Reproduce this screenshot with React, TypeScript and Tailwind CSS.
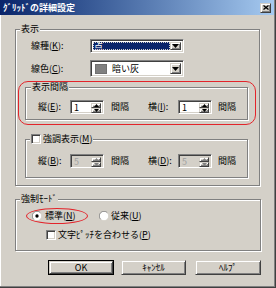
import type { ReactNode } from 'react'

const font = "font-['MS_UI_Gothic','Noto_Sans_CJK_JP',sans-serif]"
const etched = 'border border-[#808080] shadow-[inset_1px_1px_0_#fff,1px_1px_0_#fff]'
const sunken =
  'border border-t-[#808080] border-l-[#808080] border-r-white border-b-white shadow-[inset_1px_1px_0_#404040,inset_-1px_-1px_0_#d4d0c8]'
const raised =
  'bg-[#d4d0c8] border border-t-[#d4d0c8] border-l-[#d4d0c8] border-r-[#404040] border-b-[#404040] shadow-[inset_1px_1px_0_#fff,inset_-1px_-1px_0_#808080]'

function Key({ label, k }: { label: string; k: string }) {
  return (
    <span>
      {label}(<span className="underline underline-offset-1">{k}</span>)
    </span>
  )
}

function Group({ label, className, labelClass, children }: {
  label: ReactNode; className: string; labelClass?: string; children: ReactNode
}) {
  return (
    <div className={`relative ${etched} ${className}`}>
      <div className={`absolute -top-[6px] bg-[#d4d0c8] px-[1px] leading-[10px] flex items-center ${labelClass ?? 'left-[4px]'}`}>
        {label}
      </div>
      {children}
    </div>
  )
}

function DownArrow() {
  return (
    <svg width="7" height="4" viewBox="0 0 7 4"><polygon points="0,0 7,0 3.5,4" fill="#000" /></svg>
  )
}

function Combo({ h, children }: { h: string; children: ReactNode }) {
  return (
    <div className={`w-[94px] ${h} bg-white ${sunken} flex p-[2px] pr-[2px]`}>
      <div className="flex-1 flex items-center min-w-0">{children}</div>
      <div className={`w-[11px] ${raised} flex items-center justify-center`}>
        <DownArrow />
      </div>
    </div>
  )
}

function Spin({ value, disabled }: { value: string; disabled?: boolean }) {
  return (
    <div className={`w-[34px] h-[14px] ${disabled ? 'bg-[#d4d0c8]' : 'bg-white'} ${sunken} flex p-[2px]`}>
      <div className={`flex-1 leading-[10px] pl-[1px] ${disabled ? 'text-[#a0a0a0]' : 'text-black'}`}>{value}</div>
      <div className="w-[10px] flex flex-col">
        <div className={`flex-1 ${raised} flex items-center justify-center`}>
          <svg width="5" height="3" viewBox="0 0 5 3"><polygon points="2.5,0 5,3 0,3" fill={disabled ? '#808080' : '#000'} /></svg>
        </div>
        <div className={`flex-1 ${raised} flex items-center justify-center`}>
          <svg width="5" height="3" viewBox="0 0 5 3"><polygon points="0,0 5,0 2.5,3" fill={disabled ? '#808080' : '#000'} /></svg>
        </div>
      </div>
    </div>
  )
}

function SpinRow({ a, b, value, disabled }: { a: ReactNode; b: ReactNode; value: string; disabled?: boolean }) {
  return (
    <div className="flex items-center h-[14px] ml-[12px]">
      <span className="w-[32px]">{a}</span>
      <Spin value={value} disabled={disabled} />
      <span className="ml-[7px] w-[37px]">間隔</span>
      <span className="w-[30px]">{b}</span>
      <Spin value={value} disabled={disabled} />
      <span className="ml-[6px]">間隔</span>
    </div>
  )
}

function CheckBox() {
  return <div className={`w-[10px] h-[10px] bg-white ${sunken}`} />
}

function Radio({ checked }: { checked?: boolean }) {
  return (
    <svg width="10" height="10" viewBox="0 0 12 12">
      <circle cx="6" cy="6" r="5.5" fill="#fff" />
      <path d="M10 2 A5.5 5.5 0 0 0 2 10" stroke="#808080" strokeWidth="1" fill="none" />
      <path d="M2 10 A5.5 5.5 0 0 0 10 2" stroke="#d4d0c8" strokeWidth="1" fill="none" />
      {checked && <circle cx="6" cy="6" r="2" fill="#000" />}
    </svg>
  )
}

function Button({ w, ml, children, primary }: { w: string; ml: string; children: ReactNode; primary?: boolean }) {
  return (
    <div className={`${w} ${ml} h-[15px] ${primary ? 'border border-black' : ''}`}>
      <div className={`h-full ${raised} flex items-center justify-center leading-none`}>{children}</div>
    </div>
  )
}

export default function App() {
  return (
    <div className={`w-[276px] h-[288px] bg-[#d4d0c8] ${font} text-[9px] text-black flex flex-col shadow-[inset_-1px_-1px_0_#404040,inset_-2px_-2px_0_#808080,inset_1px_0_0_#fff]`}>
      {/* title bar */}
      <div className="h-[15px] w-[274px] bg-gradient-to-r from-[#0a246a] to-[#a6caf0] flex items-center pl-[3px] pr-[3px]">
        <span className="text-white font-bold text-[9px] leading-none flex-1">ｸﾞﾘｯﾄﾞの詳細設定</span>
        <div className={`w-[11px] h-[10px] ${raised} flex items-center justify-center`}>
          <svg width="6" height="5" viewBox="0 0 6 5">
            <path d="M0.5 0.5 L5.5 4.5 M5.5 0.5 L0.5 4.5" stroke="#000" strokeWidth="1.3" />
          </svg>
        </div>
      </div>

      <Group label="表示" className="ml-[15px] mt-[14px] w-[245px] h-[157px]">
        <div className="flex items-center mt-[9px] h-[14px]">
          <span className="ml-[15px] w-[59px]"><Key label="線種" k="K" />:</span>
          <Combo h="h-[14px]">
            <div className="w-full h-full bg-[#0a246a] outline outline-1 outline-dotted outline-[#d4d0c8] -outline-offset-1 text-white leading-[10px] pl-[1px]">点</div>
          </Combo>
        </div>
        <div className="flex items-center mt-[7px] h-[17px]">
          <span className="ml-[15px] w-[59px]"><Key label="線色" k="C" />:</span>
          <Combo h="h-[17px]">
            <div className="w-[12px] h-[10px] bg-[#808080] ml-[2px] border border-[#707070]" />
            <span className="ml-[5px]">暗い灰</span>
          </Combo>
        </div>

        <div className="mt-[4px] ml-[2px] w-[238px] h-[44px] border border-[#e3242b] rounded-[10px] pt-[5px] pl-[6px]">
          <Group label="表示間隔" className="w-[223px] h-[33px]" labelClass="left-[5px]">
            <div className="mt-[12px]">
              <SpinRow a={<><Key label="縦" k="E" />:</>} b={<><Key label="横" k="I" />:</>} value="1" />
            </div>
          </Group>
        </div>

        <Group
          label={<><CheckBox /><span className="ml-[2px]"><Key label="強調表示" k="M" /></span></>}
          className="mt-[14px] ml-[9px] w-[223px] h-[39px]"
          labelClass="left-[4px]"
        >
          <div className="mt-[14px]">
            <SpinRow a={<><Key label="縦" k="B" />:</>} b={<><Key label="横" k="D" />:</>} value="5" disabled />
          </div>
        </Group>
      </Group>

      <Group label="強制ﾓｰﾄﾞ" className="ml-[15px] mt-[13px] w-[246px] h-[52px]">
        <div className="flex items-center mt-[8px]">
          <div className="ml-[10px] w-[62px] h-[16px] border border-[#e3242b] rounded-[50%] flex items-center pl-[5px]">
            <Radio checked />
            <span className="ml-[3px]"><Key label="標準" k="N" /></span>
          </div>
          <div className="ml-[11px] flex items-center">
            <Radio />
            <span className="ml-[2px]"><Key label="従来" k="U" /></span>
          </div>
        </div>
        <div className="flex items-center mt-[4px] ml-[30px]">
          <CheckBox />
          <span className="ml-[2px]">文字ﾋﾟｯﾁを合わせる(<span className="underline underline-offset-1">P</span>)</span>
        </div>
      </Group>

      <div className="flex mt-[9px]">
        <Button w="w-[66px]" ml="ml-[48px]" primary>OK</Button>
        <Button w="w-[65px]" ml="ml-[7px]">ｷｬﾝｾﾙ</Button>
        <Button w="w-[66px]" ml="ml-[9px]">ﾍﾙﾌﾟ</Button>
      </div>
    </div>
  )
}
